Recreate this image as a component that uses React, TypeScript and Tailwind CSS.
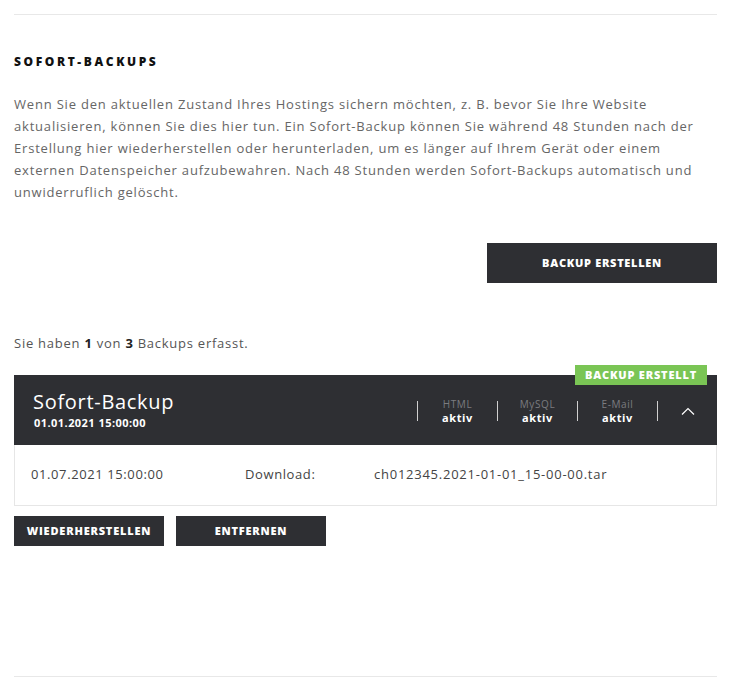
import React from "react";

const font = { fontFamily: "'Open Sans', 'Liberation Sans', sans-serif" };

function Stat({ label }: { label: string }) {
  return (
    <div className="flex items-center">
      <div className="w-px h-[20px] bg-[#d0d0d0]" />
      <div className="w-[79px] flex flex-col items-center leading-none">
        <span className="text-[10px] text-[#7b7c80] tracking-[0.6px]">{label}</span>
        <span className="text-[11px] font-bold text-white tracking-[0.6px] mt-[3px]">aktiv</span>
      </div>
    </div>
  );
}

export default function App() {
  return (
    <div className="bg-white w-[731px] h-[695px] px-[14px] pt-[14px]" style={font}>
      <div className="h-px bg-[#e8e8e8]" />
      <h2 className="mt-[40px] text-[12px] font-extrabold tracking-[2.6px] text-[#111] leading-[14px]">SOFORT-BACKUPS</h2>
      <p className="mt-[24px] text-[13px] leading-[22px] text-[#666] tracking-[0.8px] whitespace-nowrap">
        Wenn Sie den aktuellen Zustand Ihres Hostings sichern möchten, z. B. bevor Sie Ihre Website
        <br />
        aktualisieren, können Sie dies hier tun. Ein Sofort-Backup können Sie während 48 Stunden nach der
        <br />
        Erstellung hier wiederherstellen oder herunterladen, um es länger auf Ihrem Gerät oder einem
        <br />
        externen Datenspeicher aufzubewahren. Nach 48 Stunden werden Sofort-Backups automatisch und
        <br />
        unwiderruflich gelöscht.
      </p>
      <div className="flex justify-end mt-[40px]">
        <button className="w-[230px] h-[40px] bg-[#2e2f33] text-white text-[11px] font-extrabold tracking-[0.7px]">BACKUP ERSTELLEN</button>
      </div>
      <p className="mt-[52px] text-[13px] text-[#555] tracking-[0.75px] leading-[16px]">
        Sie haben <b className="text-[#222]">1</b> von <b className="text-[#222]">3</b> Backups erfasst.
      </p>
      <div className="relative mt-[24px]">
        <div className="absolute right-[10px] top-[-10px] h-[20px] w-[132px] bg-[#7ac555] text-white text-[11px] font-extrabold tracking-[0.8px] flex items-center justify-center">BACKUP ERSTELLT</div>
        <div className="h-[70px] bg-[#2e2f33] flex items-center pl-[19px]">
          <div className="flex-1 flex flex-col">
            <span className="text-[20px] text-white leading-[24px] tracking-[0.7px]">Sofort-Backup</span>
            <span className="text-[11px] text-white font-bold leading-[14px] mt-[2px] ml-[1px] tracking-[0.45px]">01.01.2021 15:00:00</span>
          </div>
          <div className="flex items-center mt-[2px]">
            <Stat label="HTML" />
            <Stat label="MySQL" />
            <Stat label="E-Mail" />
            <div className="w-px h-[20px] bg-[#d0d0d0]" />
            <div className="w-[59px] flex justify-center">
              <svg width="14" height="8" viewBox="0 0 14 8" fill="none" stroke="#fff" strokeWidth="1.2">
                <path d="M1 7.5 L7 1.5 L13 7.5" />
              </svg>
            </div>
          </div>
        </div>
        <div className="h-[61px] border border-t-0 border-[#e6e6e6] flex items-center text-[13px] text-[#444] tracking-[0.6px]">
          <span className="ml-[16px] w-[214px]">01.07.2021 15:00:00</span>
          <span className="w-[129px]">Download:</span>
          <span className="tracking-[0.75px]">ch012345.2021-01-01_15-00-00.tar</span>
        </div>
      </div>
      <div className="flex gap-[12px] mt-[10px]">
        <button className="w-[150px] h-[30px] bg-[#2e2f33] text-white text-[11px] font-extrabold tracking-[0.8px]">WIEDERHERSTELLEN</button>
        <button className="w-[150px] h-[30px] bg-[#2e2f33] text-white text-[11px] font-extrabold tracking-[0.8px]">ENTFERNEN</button>
      </div>
      <div className="h-px bg-[#e8e8e8] mt-[130px]" />
    </div>
  );
}
